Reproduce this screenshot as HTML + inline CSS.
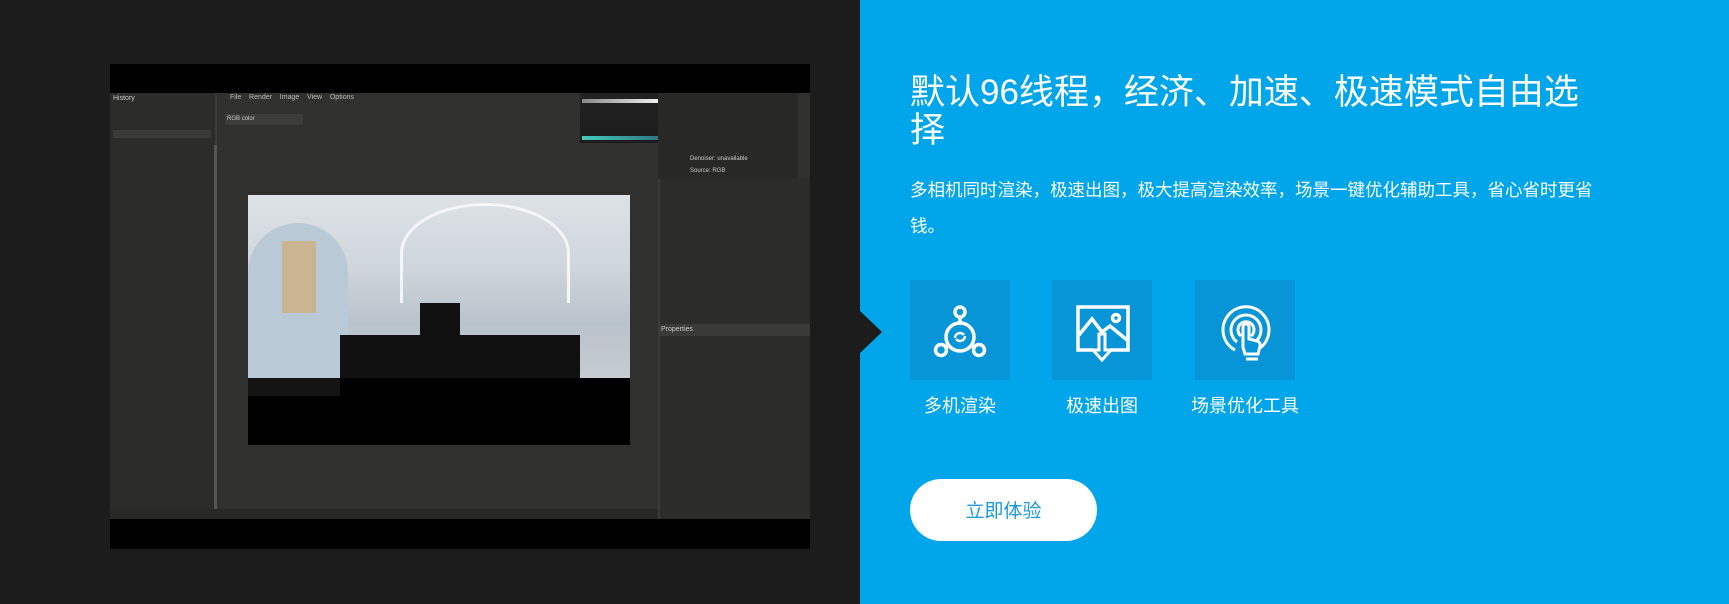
<!DOCTYPE html>
<html><head><meta charset="utf-8"><style>
*{margin:0;padding:0;box-sizing:border-box}
body{width:1729px;height:604px;background:#1c1c1c;position:relative;overflow:hidden;font-family:"Liberation Sans","Noto Sans CJK SC",sans-serif}
.a{position:absolute}
.blue{left:860px;top:0;width:869px;height:604px;background:#00a5ea}
.tri{left:860px;top:311px;width:0;height:0;border-top:21px solid transparent;border-bottom:21px solid transparent;border-left:22px solid #1c1c1c}
h1{position:absolute;left:910px;top:74px;width:690px;font-size:35px;line-height:38px;font-weight:normal;color:#fff}
p{position:absolute;left:910px;top:172px;width:695px;font-size:17.5px;line-height:36px;color:#fff}
.box{top:280px;width:100px;height:100px;background:#0795d8}
.lbl{top:392px;width:140px;text-align:center;color:#fff;font-size:18px}
.btn{left:910px;top:479px;width:187px;height:62px;border-radius:31px;background:#fff;color:#1a9ad6;font-size:19px;text-align:center;line-height:66px}
.vid{left:110px;top:64px;width:700px;height:485px;background:#000}
.app{left:110px;top:93px;width:700px;height:426px;background:#30302e;font-size:7px;color:#ccc}
</style></head><body>
<div class="a vid"></div>
<div class="a app">
 <div class="a" style="left:0;top:0;width:107px;height:426px;background:#2c2c2a;border-right:2px solid #3a3a38"></div>
 <div class="a" style="left:3px;top:2px">History</div>
 <div class="a" style="left:3px;top:37px;width:98px;height:8px;background:#3a3a38"></div>
 <div class="a" style="left:104px;top:52px;width:3px;height:370px;background:#555"></div>
 <div class="a" style="left:120px;top:1px;color:#bbb">File &nbsp;&nbsp; Render &nbsp;&nbsp; Image &nbsp;&nbsp; View &nbsp;&nbsp; Options</div>
 <div class="a" style="left:115px;top:21px;width:78px;height:11px;background:#3c3c3a;font-size:6px;padding-left:2px;line-height:11px">RGB color</div>
 <div class="a" style="left:470px;top:0;width:160px;height:50px;background:linear-gradient(#222,#1c1c1c)"></div>
 <div class="a" style="left:472px;top:6px;width:148px;height:4px;background:linear-gradient(90deg,#888,#eee,#666)"></div>
 <div class="a" style="left:472px;top:43px;width:120px;height:4px;background:linear-gradient(90deg,#4cb,#246)"></div>
 <div class="a" style="left:548px;top:0;width:140px;height:86px;background:#282826"></div>
 <div class="a" style="left:580px;top:63px;font-size:6px">Denoiser: unavailable</div>
 <div class="a" style="left:580px;top:75px;font-size:6px">Source: RGB</div>
 <div class="a" style="left:548px;top:86px;width:152px;height:340px;background:#2c2c2a;border-left:2px solid #3a3a38"></div>
 <div class="a" style="left:548px;top:231px;width:152px;height:12px;background:#3a3a38;padding-left:3px;line-height:12px">Properties</div>
 <div class="a" style="left:138px;top:102px;width:382px;height:183px;background:linear-gradient(180deg,#dde2e6 0%,#cfd6dc 40%,#b9c3cc 70%,#c6ccd0 100%)"></div>
 <div class="a" style="left:290px;top:110px;width:170px;height:100px;border-radius:50% 50% 0 0;border:3px solid #f4f6f8;border-bottom:none"></div>
 <div class="a" style="left:138px;top:130px;width:100px;height:155px;border-radius:50px 50px 0 0;background:#b9c9d6"></div>
 <div class="a" style="left:172px;top:148px;width:34px;height:72px;background:#c9b592"></div>
 <div class="a" style="left:138px;top:285px;width:382px;height:67px;background:#000"></div>
 <div class="a" style="left:230px;top:242px;width:240px;height:43px;background:#111"></div>
 <div class="a" style="left:310px;top:210px;width:40px;height:32px;background:#111"></div>
 <div class="a" style="left:138px;top:285px;width:92px;height:18px;background:#141414"></div>
 <div class="a" style="left:0;top:416px;width:548px;height:10px;background:#282826"></div>
</div>
<div class="a blue"></div>
<div class="a tri"></div>
<h1>默认96线程，经济、加速、极速模式自由选择</h1>
<p>多相机同时渲染，极速出图，极大提高渲染效率，场景一键优化辅助工具，省心省时更省钱。</p>
<div class="a box" style="left:910px">
 <svg width="100" height="100" viewBox="0 0 100 100" fill="none" stroke="#fff" stroke-width="3.5"><circle cx="50" cy="32" r="5"/><line x1="50" y1="37" x2="50" y2="43"/><circle cx="50" cy="57" r="14"/><circle cx="31" cy="70" r="5.5"/><circle cx="69" cy="70" r="5.5"/><line x1="36" y1="67" x2="39" y2="65"/><line x1="64" y1="67" x2="61" y2="65"/><path d="M45 58a5 5 0 0 1 9-3M55 56a5 5 0 0 1-9 3" stroke-width="2.5"/></svg>
</div>
<div class="a box" style="left:1052px">
 <svg width="100" height="100" viewBox="0 0 100 100" fill="none" stroke="#fff" stroke-width="3.5"><path d="M42 70H26V27h50v43H58"/><path d="M27 55l13-16 10 13 8-6 17 14"/><circle cx="64" cy="38" r="3.5"/><path d="M47 54v16h-6l9 10 9-10h-6V54z" stroke-width="3"/></svg>
</div>
<div class="a box" style="left:1195px">
 <svg width="100" height="100" viewBox="0 0 100 100" fill="none" stroke="#fff" stroke-width="3"><path d="M40 70a23 23 0 1 1 22 0"/><path d="M42 62a15 15 0 1 1 18 0"/><path d="M46 56a8 8 0 1 1 10 0"/><path d="M48 67V47a3 3 0 0 1 6 0v12l8 2a4 4 0 0 1 3 5l-2 8H50z" fill="#0795d8"/><line x1="51" y1="79" x2="63" y2="79"/></svg>
</div>
<div class="a lbl" style="left:890px">多机渲染</div>
<div class="a lbl" style="left:1032px">极速出图</div>
<div class="a lbl" style="left:1175px">场景优化工具</div>
<div class="a btn">立即体验</div>
</body></html>
